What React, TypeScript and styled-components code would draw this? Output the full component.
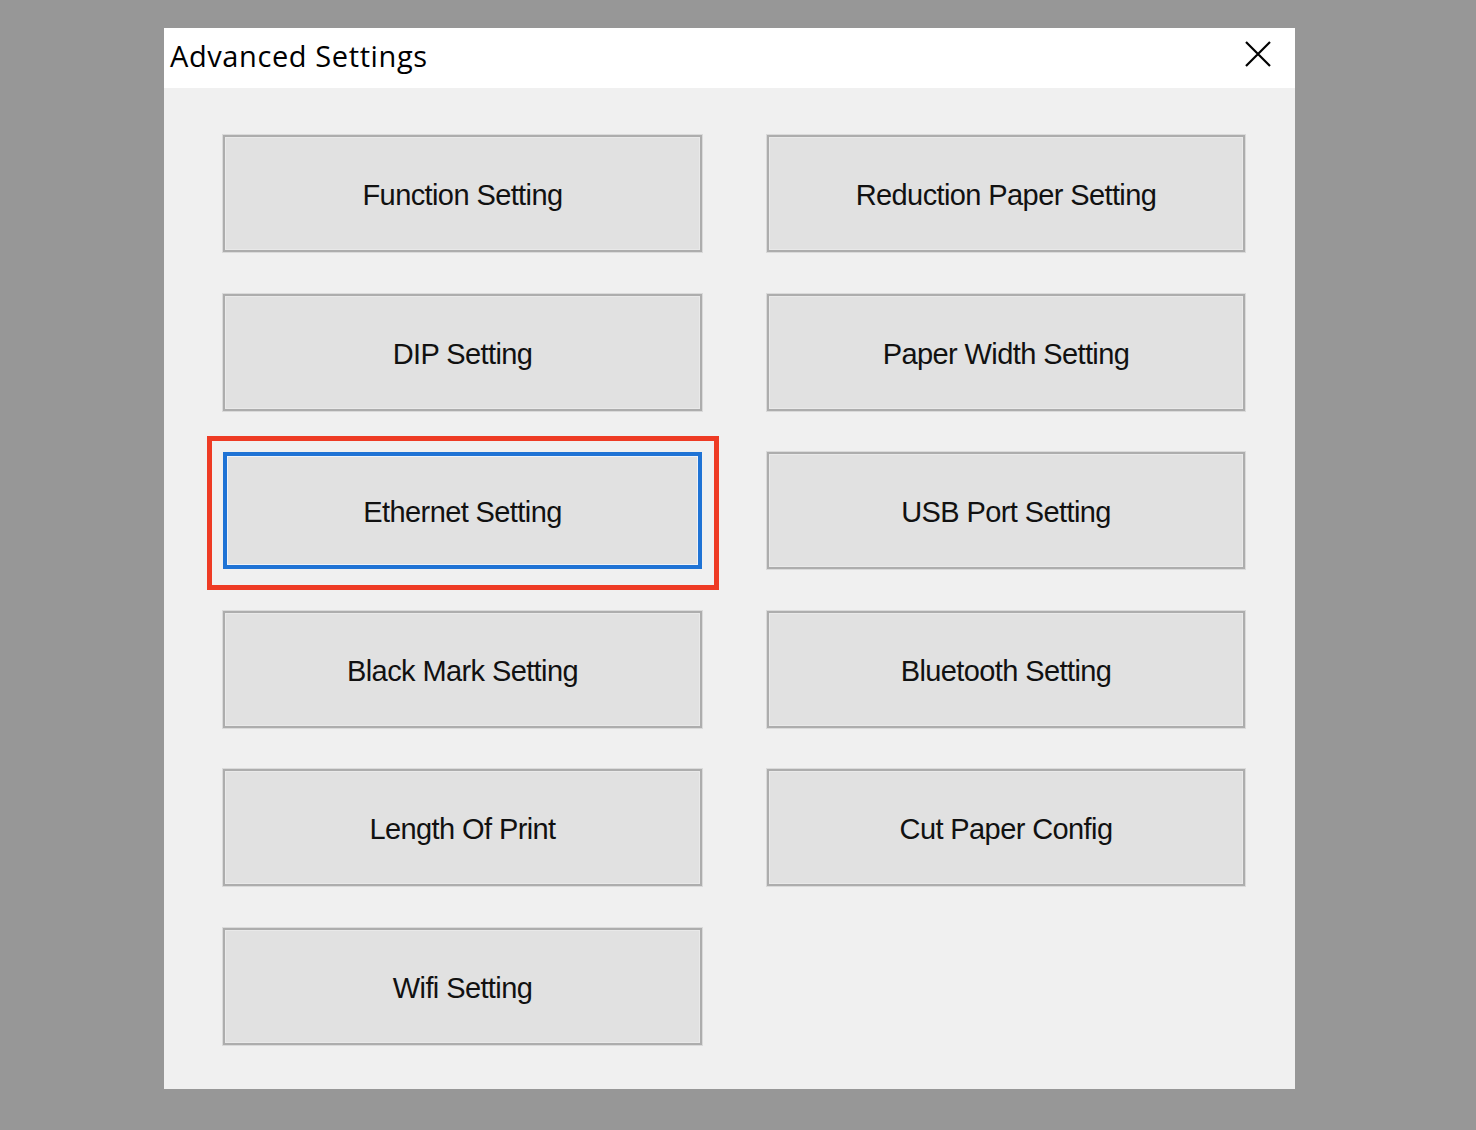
import React from "react";
import styled, { createGlobalStyle } from "styled-components";

const GlobalStyle = createGlobalStyle`
  html, body {
    margin: 0;
    padding: 0;
    background: #979797;
  }
  body {
    font-family: "Liberation Sans", Arial, sans-serif;
  }
`;

const Backdrop = styled.div`
  width: 1476px;
  height: 1130px;
  padding: 28px 0 0 164px;
  box-sizing: border-box;
  background: #979797;
`;

const Window = styled.div`
  width: 1131px;
  height: 1061px;
  background: #f0f0f0;
  display: flex;
  flex-direction: column;
`;

const TitleBar = styled.div`
  height: 60px;
  background: #ffffff;
  display: flex;
  align-items: center;
  justify-content: space-between;
  padding: 0 24px 6px 6px;
  box-sizing: border-box;
`;

const Title = styled.span`
  font-family: "Open Sans", "Noto Sans", sans-serif;
  font-size: 29px;
  color: #000;
  letter-spacing: 0.6px;
`;

const CloseButton = styled.button`
  width: 26px;
  height: 26px;
  padding: 0;
  margin-top: -2px;
  border: none;
  background: transparent;
  display: flex;
  align-items: center;
  justify-content: center;
`;

const Body = styled.div`
  flex: 1;
  padding: 47px 50px 0 59px;
  display: grid;
  grid-template-columns: 479px 478px;
  grid-auto-rows: 117px;
  column-gap: 65px;
  row-gap: 41.6px;
  align-content: start;
`;

const SettingButton = styled.button<{ $focused?: boolean }>`
  position: relative;
  box-sizing: border-box;
  width: 100%;
  height: 100%;
  margin: 0;
  background: #e1e1e1;
  border: ${(p) => (p.$focused ? "4px solid #1f73d5" : "2px solid #adadad")};
  box-shadow: ${(p) =>
    p.$focused
      ? "inset 0 0 0 1px #eef3fa"
      : "inset 0 0 0 1px #e9e9e9, 0 0 0 1px #dadada"};
  font-family: "Liberation Sans", Arial, sans-serif;
  font-size: 29px;
  letter-spacing: -0.6px;
  color: #111;
  padding: 4px 0 0 0;
  cursor: default;

  ${(p) =>
    p.$focused &&
    `
    &::after {
      content: "";
      position: absolute;
      left: -20px;
      top: -20px;
      right: -21px;
      bottom: -25px;
      border: 5px solid #ee3b24;
      pointer-events: none;
    }
  `}
`;

const settings = [
  "Function Setting",
  "Reduction Paper Setting",
  "DIP Setting",
  "Paper Width Setting",
  "Ethernet Setting",
  "USB Port Setting",
  "Black Mark Setting",
  "Bluetooth Setting",
  "Length Of Print",
  "Cut Paper Config",
  "Wifi Setting",
];

export default function App() {
  return (
    <>
      <GlobalStyle />
      <Backdrop>
        <Window>
          <TitleBar>
            <Title>Advanced Settings</Title>
            <CloseButton aria-label="Close">
              <svg width="26" height="26" viewBox="0 0 26 26">
                <path
                  d="M1 1 L25 25 M25 1 L1 25"
                  stroke="#000"
                  strokeWidth="2.2"
                  fill="none"
                />
              </svg>
            </CloseButton>
          </TitleBar>
          <Body>
            {settings.map((label) => (
              <SettingButton key={label} $focused={label === "Ethernet Setting"}>
                {label}
              </SettingButton>
            ))}
          </Body>
        </Window>
      </Backdrop>
    </>
  );
}
